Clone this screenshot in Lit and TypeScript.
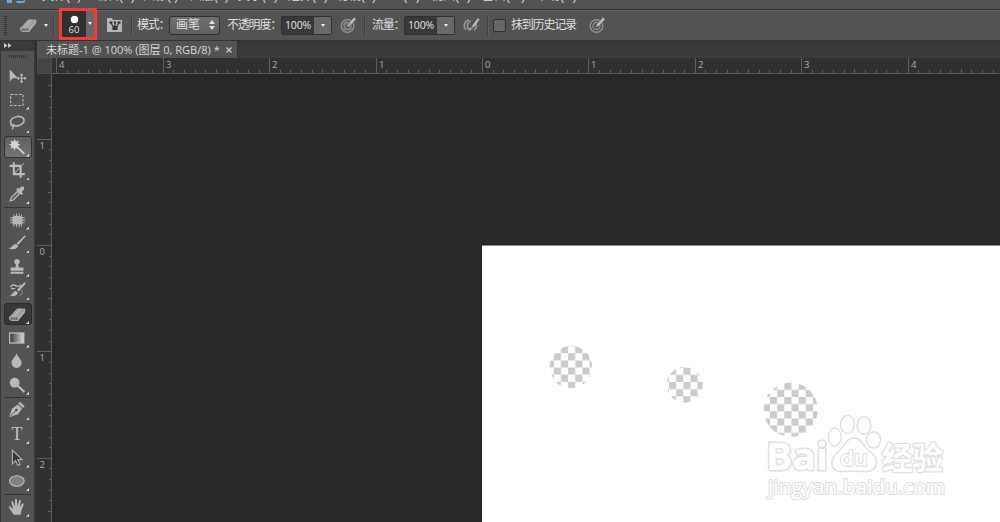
import { LitElement, html, svg, css } from "lit";
import { customElement, property } from "lit/decorators.js";

type Tick = { pos: number; len: number; label?: string };

const UNIT = 106.4;

function ticks(origin: number, limit: number): Tick[] {
  const out: Tick[] = [];
  for (let i = -50; i <= 50; i++) {
    const pos = origin + (i * UNIT) / 10;
    if (pos < 2 || pos > limit) continue;
    const major = i % 10 === 0;
    out.push({
      pos: Math.round(pos),
      len: major ? 16 : i % 5 === 0 ? 5 : 4,
      label: major ? String(Math.abs(i / 10)) : undefined,
    });
  }
  return out;
}

const icons: Record<string, unknown> = {
  move: svg`<path d="M4 5v13l3.400-3.600 5.600-.2z"/><path d="M17 10v9M12.500 14.500h9" stroke="#bdbdbd" stroke-width="1.200"/><path d="M17 9l2 2.500h-4zM17 20l2-2.500h-4zM11.500 14.500l2.500-2v4zM22.500 14.500l-2.500-2v4z"/>`,
  marquee: svg`<rect x="5" y="6" width="13.500" height="12" fill="none" stroke="#bdbdbd" stroke-width="1.200" stroke-dasharray="3 1.600"/>`,
  lasso: svg`<ellipse cx="12.300" cy="10" rx="7.500" ry="5" transform="rotate(-12 12.300 10)" fill="none" stroke="#b5b5b5" stroke-width="1.800"/><path d="M6.500 12.500c-2.500 2 .5 3.800 1.800 1.800M8 13c1 2 .3 3.500-1.200 6" fill="none" stroke="#b5b5b5" stroke-width="1.300"/>`,
  wand: svg`<path d="M11 11l9 8.500" stroke="#c9c9c9" stroke-width="2.200"/><path d="M9.500 3l1.300 3.300L14 4.800l-1.200 3.400 3 1.300-3.200 1.500 1 3-3.100-1.300L9.300 16 8 12.700 5 14l1.200-3.200L3 9.500l3.200-1.300L5 5l3.300 1.300z" fill="#d6d6d6"/>`,
  crop: svg`<path d="M8.500 3.500v13H20.500M4 7.500h12v13" fill="none" stroke="#bdbdbd" stroke-width="2.200"/><path d="M9 16L19.500 4.500" stroke="#bdbdbd"/>`,
  dropper: svg`<path d="M4.500 19.500l1-3.500 7-7 2.500 2.500L8 18.500z" fill="#686868" stroke="#c0c0c0" stroke-width="1.200"/><path d="M11 7l6 6 1.500-1.500-1.500-1.700c3-2 3.600-4.500 2.300-5.600s-3.500-.2-5 2L12.500 5.500z"/>`,
  patch: svg`<rect x="7" y="7.500" width="11" height="9.500" rx="3"/><path d="M8.500 6v13M11.500 5v15M14.500 5v15M17 6v13M4.500 9.500h16M4 12.300h17M4.500 15h16" stroke="#b5b5b5" stroke-width="1.100"/>`,
  brush: svg`<path d="M20.500 3.500L11.500 12.500l1.700 1.800L21.500 4.500zM11 13l2.300 2.300c-1.500 3.700-5.300 4.500-10.300 2.700 3-.4 4-4.800 8-5z"/>`,
  stamp: svg`<circle cx="12" cy="6.300" r="3"/><path d="M11 8h2.300l.6 4.500H19v3.500H5v-3.500h5.400zM5 17.300h14V19.300H5z"/>`,
  history: svg`<path d="M20 3.500l-8 8.500 2 1.700L21.500 5zM11 13l2 2c-1 3.500-4 4.500-9 3.300 3-1 3.300-4.800 7-5.300z"/><path d="M5 9c1-3 4-3 6-1.500 2 1.200 4 .5 5-1.500M10 10.500H5.500" fill="none" stroke="#b5b5b5" stroke-width="1.500"/><path d="M17 12.500c2 2 0 5-3 6" fill="none" stroke="#bdbdbd" stroke-dasharray="1.500 1"/>`,
  eraser: svg`<path d="M4 15L12 6h8.500l-7 9z" fill="#a2a2a2"/><path d="M4 15h9.500v4H6c-2 0-2.500-2-2-4z" fill="#777" stroke="#b8b8b8"/><path d="M13.500 15L20.500 6c1 1.500.6 3.500-.3 4.800L13.500 19z" fill="#b0b0b0"/><path d="M8.500 14.500L15.500 6" stroke="#c6c6c6"/>`,
  gradient: svg`<defs><linearGradient id="g"><stop stop-color="#333"/><stop offset="1" stop-color="#ddd"/></linearGradient></defs><rect x="4" y="6.500" width="15.500" height="11" fill="url(#g)" stroke="#c0c0c0" stroke-width="1.300"/>`,
  drop: svg`<path d="M11.500 3.500c1 3.800 5.500 6.500 5.500 10.500a5.500 5.500 0 01-11 0c0-4 4.500-6.700 5.500-10.500z"/>`,
  dodge: svg`<circle cx="9.500" cy="9.500" r="5.300"/><path d="M13 13l7 6.500" stroke="#bdbdbd" stroke-width="2.300"/>`,
  pen: svg`<path d="M15 3l5.500 5-2 1.800-5.300-5zM3.500 20l3-9.500L13 6l4.500 4.300-4 6z"/><path d="M4.500 19l6-6" stroke="#484848"/><circle cx="11.300" cy="12" r="1.400" fill="#484848"/>`,
  select: svg`<path d="M7 3.500v15l3.500-3.600 2.300 5.100 2.500-1-2.300-5.200h4.500z" fill="#353535" stroke="#ababab" stroke-width="1.300"/>`,
  ellipse: svg`<ellipse cx="11.800" cy="12" rx="8" ry="5.800" fill="#828282" stroke="#bdbdbd" stroke-width="1.200"/>`,
  hand: svg`<path d="M8.500 20.500L3.500 13.200c-1.200-1.900.5-2.500 1.700-1.200l2.500 2.500L6 7c-.2-1.900 1.600-2 2-.3l1.600 5L9.800 4.600c0-1.700 2-1.700 2.300 0l.4 6.900 1.800-6.500c.5-1.600 2.200-1.100 1.900.5l-1.100 6.800 2.300-3.700c.9-1.500 2.500-.6 1.800 1L17 15.500 15.700 20.500z"/>`,
};

const airbrush = svg`<circle cx="7.500" cy="10" r="6.300" fill="none" stroke="#8e8e8e" stroke-width="1.400"/><circle cx="7.500" cy="10" r="3.500" fill="none" stroke="#8e8e8e" stroke-width="1.300"/><path d="M6.500 11.500l1.200-3L14 1.300l2.200 1.700-6.200 7z" fill="#c0c0c0" stroke="#535353" stroke-width=".5"/>`;

@customElement("ps-tool")
export class PsTool extends LitElement {
  @property() name = "";
  @property() state = "";
  static styles = css`
    :host { display: block; height: 23.600px; flex: none; }
    .cell { box-sizing: border-box; position: relative; width: 28px; height: 22px; margin-left: 3px; border: 1px solid transparent; border-radius: 3px; }
    .hover { background: linear-gradient(#606060, #747474); border-color: #333; }
    .active { background: #383838; border-color: #2b2b2b; }
    .icon { display: block; width: 22px; height: 22px; margin: -1px 0 0 1px; fill: #b9b9b9; }
    .letter { display: block; width: 24px; text-align: center; font: 18px/20px "Liberation Serif", serif; color: #c2c2c2; }
    .corner { position: absolute; right: 2px; bottom: 0; width: 3px; height: 3px; background: #ddd; clip-path: polygon(100% 0, 100% 100%, 0 100%); }
  `;
  render() {
    return html`<div class="cell ${this.state}">
      ${this.name === "type"
        ? html`<span class="letter">T</span>`
        : html`<svg class="icon" viewBox="0 0 24 24">${icons[this.name]}</svg>`}
      ${this.name === "move" ? "" : html`<i class="corner"></i>`}
    </div>`;
  }
}

@customElement("app-root")
export class AppRoot extends LitElement {
  static styles = css`
    :host { display: flex; flex-direction: column; width: 1000px; height: 522px; overflow: hidden; background: #282828; color: #dedede; font: 12px "Liberation Sans", "Noto Sans CJK SC", sans-serif; }
    * { box-sizing: border-box; }
    svg { display: block; flex: none; }
    .menu { height: 10px; flex: none; overflow: hidden; background: #535353; border-bottom: 1px solid #333; display: flex; align-items: flex-end; }
    .menu svg { margin: 0 15px 6px 6px; }
    .items { display: flex; height: 22px; line-height: 18px; }
    .item { flex: none; white-space: nowrap; }
    .options { height: 31px; flex: none; background: #535353; border-top: 1px solid #686868; border-bottom: 1px solid #333; display: flex; align-items: center; padding-bottom: 1px; }
    .grip { width: 3px; height: 19px; margin-left: 4px; background: repeating-linear-gradient(#333 0 1px, transparent 1px 2px); }
    .arrow { width: 0; height: 0; border: 2.500px solid transparent; border-top: 3px solid #eee; border-bottom: 0; }
    .divider { width: 2px; height: 21px; background: #414141; border-right: 1px solid #5e5e5e; }
    .preset { width: 38px; height: 32px; flex: none; margin-left: 4px; border: 3px solid #f33a36; display: flex; z-index: 1; margin-bottom: 3px; }
    .tip { width: 24px; background: #303030; display: flex; flex-direction: column; align-items: center; font: 9.500px/10px "Open Sans", sans-serif; padding-top: 5px; gap: 2px; }
    .dot { width: 7px; height: 7px; border-radius: 50%; background: #fff; box-shadow: 0 0 1px #fff; }
    .drop { flex: 1; display: flex; align-items: center; justify-content: center; background: #686868; }
    .label { flex: none; white-space: nowrap; line-height: 18px; letter-spacing: -1.200px; }
    .mode { width: 51px; height: 19px; border: 1px solid #303030; border-radius: 3px; background: linear-gradient(#707070, #606060); display: flex; align-items: center; justify-content: space-between; padding: 0 4px 0 6px; line-height: 16px; }
    .field { width: 51px; height: 19px; border: 1px solid #303030; border-radius: 2px; display: flex; background: #383838; font: 10.500px/17px "Open Sans", sans-serif; color: #e6e6e6; }
    .value { width: 32px; text-align: center; letter-spacing: -.2px; }
    .check { width: 13px; height: 13px; border: 1px solid #303030; border-radius: 2px; background: #676767; }
    .main { flex: 1; min-height: 0; display: flex; }
    .tools { width: 35px; flex: none; display: flex; flex-direction: column; background: #535353; border-left: 1px solid #383838; border-right: 1px solid #383838; }
    .collapse { height: 10px; flex: none; background: #3a3a3a; padding: 2px 0 0 3px; }
    .handle { width: 18px; height: 3px; flex: none; margin: 4px 0 7px 8px; background: repeating-linear-gradient(90deg, #333 0 1px, transparent 1px 2px); }
    .rule { width: 27px; height: 1px; flex: none; margin: 0 0 1px 3px; background: #353535; }
    .doc { flex: 1; min-width: 0; display: flex; flex-direction: column; border-left: 2px solid #303030; }
    .tabs { height: 17px; flex: none; background: linear-gradient(#383838, #3c3c3c); }
    .tab { width: 201px; height: 17px; background: #535353; display: flex; align-items: center; padding-left: 9px; font: 11px/16px "Open Sans", "Noto Sans CJK SC", sans-serif; color: #d6d6d6; white-space: nowrap; border-right: 1px solid #303030; }
    .title { width: 173px; letter-spacing: 0; margin-right: 7px; }
    .hruler, .lower { display: flex; }
    .corner { width: 15px; height: 16px; background: #444; border: 1px dotted #555; }
    .num { font: 9.500px "Open Sans", sans-serif; fill: #aaa; }
    .mark { font-family: "Open Sans", "Noto Sans CJK SC", sans-serif; fill: #fff; stroke: #e0e0e0; paint-order: stroke; stroke-linejoin: round; }
  `;

  private hole(id: string, cx: number, cy: number, r: number, px: number, py: number) {
    return svg`<pattern id=${id} x=${px} y=${py} width="14.300" height="14.300" patternUnits="userSpaceOnUse"><path d="M0 0h7.150v7.150H0zM7.150 7.150h7.150v7.150H7.150z" fill="#cbcbcb"/></pattern><circle cx=${cx} cy=${cy} r=${r} fill="url(#${id})"/>`;
  }

  private field(value: string) {
    return html`<div class="field"><span class="value">${value}</span><span class="drop"><i class="arrow"></i></span></div>`;
  }

  private tool(name: string, state = "") {
    return html`<ps-tool .name=${name} .state=${state}></ps-tool>`;
  }

  render() {
    const menus: [string, number][] = [["文件(F)", 53], ["编辑(E)", 48], ["图像(I)", 47], ["图层(L)", 48], ["文字(Y)", 50], ["选择(S)", 49], ["滤镜(T)", 51], ["3D(D)", 43], ["视图(V)", 51], ["窗口(W)", 54], ["帮助(H)", 50]];
    return html`
      <div class="menu">
        <svg width="21" height="3"><path d="M1 0h5v3H1zM10 1h7l2-1v2l-2 1h-6z" fill="#79a5d5"/></svg>
        <div class="items">${menus.map(([t, w]) => html`<span class="item" style="width:${w}px">${t}</span>`)}</div>
      </div>
      <div class="options">
        <i class="grip"></i>
        <svg width="22" height="22" viewBox="0 0 24 24" style="margin-left:10px">${icons.eraser}</svg>
        <i class="arrow" style="margin-left:5px"></i>
        <i class="divider" style="margin-left:5px"></i>
        <div class="preset"><div class="tip"><i class="dot"></i>60</div><div class="drop"><i class="arrow"></i></div></div>
        <svg width="16" height="16" viewBox="0 0 16 16" style="margin-left:10px"><path d="M0 1h5l1 2h9v12H0z" fill="#b5b5b5"/><path d="M4 6l2.500 4M8 6v4M12 6l-2.500 4" fill="none" stroke="#333" stroke-width="1.200"/><path d="M2.500 4.500h3v2h-3zM7 4.500h2v2H7zM10.500 4.500h3v2h-3zM5.500 9h5v4h-5z" fill="#333"/></svg>
        <i class="divider" style="margin-left:8px"></i>
        <span class="label" style="margin-left:4px;width:32px">模式：</span>
        <div class="mode">画笔<svg width="6" height="10"><path d="M0 4l3-4 3 4zM0 6h6l-3 4z" fill="#e0e0e0"/></svg></div>
        <span class="label" style="margin-left:7px;width:54px">不透明度：</span>
        ${this.field("100%")}
        <svg width="17" height="18" style="margin-left:8px">${airbrush}<path d="M2 8h10M2 13h10M5 5v11M10 7v9" stroke="#8e8e8e" stroke-width=".8"/></svg>
        <i class="divider" style="margin-left:7px"></i>
        <span class="label" style="margin-left:6px;width:32px">流量：</span>
        ${this.field("100%")}
        <svg width="18" height="18" style="margin-left:8px"><path d="M6 4C1 5 0 11 3 14M8 5c-4 1-5 8-1 9l7-8M13 8c1 3 0 5-2 6M5 14l3-2" fill="none" stroke="#969696" stroke-width="1.600"/><path d="M9 10l6-8 1.500 1.500L11 11z" fill="#bbb"/></svg>
        <i class="divider" style="margin-left:6px"></i>
        <i class="check" style="margin-left:4px"></i>
        <span class="label" style="margin-left:5px;width:64px">抹到历史记录</span>
        <svg width="18" height="18" style="margin-left:14px">${airbrush}</svg>
      </div>
      <div class="main">
        <div class="tools">
          <div class="collapse"><svg width="8" height="6"><path d="M0 0l3.500 2.500L0 5zM4 0l3.500 2.500L4 5z" fill="#ccc"/></svg></div>
          <i class="handle"></i>
          ${["move", "marquee", "lasso"].map((n) => this.tool(n))}
          ${this.tool("wand", "hover")}${this.tool("crop")}${this.tool("dropper")}
          <i class="rule"></i>
          ${["patch", "brush", "stamp", "history"].map((n) => this.tool(n))}
          ${this.tool("eraser", "active")}
          ${["gradient", "drop", "dodge"].map((n) => this.tool(n))}
          <i class="rule"></i>
          ${["pen", "type", "select", "ellipse"].map((n) => this.tool(n))}
          <i class="rule"></i>
          ${this.tool("hand")}
        </div>
        <div class="doc">
          <div class="tabs"><div class="tab"><span class="title">未标题-1 @ 100% (图层 0, RGB/8) *</span><svg width="6" height="6"><path d="M.5.5l5 5m0-5l-5 5" stroke="#ccc" stroke-width="1.300"/></svg></div></div>
          <div class="hruler">
            <i class="corner"></i>
            <svg width="948" height="16" style="background:#303030"><path d="M0 15.500h948" stroke="#5c5c5c"/>
              ${ticks(430, 948).map((t) => svg`<path d="M${t.pos + 0.5} ${16 - t.len}v${t.len}" stroke="#5e5e5e"/>${t.label ? svg`<text class="num" x=${t.pos + 3} y="10">${t.label}</text>` : ""}`)}
            </svg>
          </div>
          <div class="lower">
            <svg width="15" height="448" style="background:#303030"><path d="M14.500 0v448" stroke="#5c5c5c"/>
              ${ticks(171, 448).map((t) => svg`<path d="M${16 - t.len} ${t.pos + 0.5}h${t.len}" stroke="#5e5e5e"/>${t.label ? svg`<text class="num" x="2.500" y=${t.pos + 10}>${t.label}</text>` : ""}`)}
            </svg>
            <svg width="948" height="448" viewBox="52 74 948 448">
              <path d="M52 74h948v448H52z" fill="#282828"/>
              <path d="M481 244h519v278H481z" fill="#202020"/>
              <path d="M482 245.500h518V522H482z" fill="#fff"/>
              ${this.hole("c1", 571, 367, 21.2, 553.8, 353.2)}
              ${this.hole("c2", 684.8, 384.7, 18, 669, 382)}
              ${this.hole("c3", 790.7, 409.7, 27, 770, 397)}
              <g fill="#fff" stroke="#e0e0e0" stroke-width="1.500">
                <ellipse cx="834.700" cy="437" rx="6.500" ry="8.700"/><ellipse cx="847.500" cy="424.500" rx="7" ry="9"/><ellipse cx="864" cy="425.500" rx="7" ry="8.700"/><ellipse cx="873.500" cy="440" rx="7" ry="8.300"/>
                <path d="M854 438c7 0 9 7 14 12 5 4 10 8 8 15-2 8-11 7-22 6-11 1-20 2-22-6-1-7 3-11 8-15 5-5 7-12 14-12z"/>
              </g>
              <text class="mark" x="766" y="470" font-size="38" font-weight="700" textLength="62" lengthAdjust="spacingAndGlyphs" stroke-width="3">Bai</text>
              <text class="mark" x="840" y="466" font-size="22" font-weight="600" textLength="28" lengthAdjust="spacingAndGlyphs" stroke-width="2.200">du</text>
              <text class="mark" x="882" y="468.500" font-size="31" font-weight="700" textLength="61" lengthAdjust="spacingAndGlyphs" stroke-width="2.500">经验</text>
              <text class="mark" x="768" y="494" font-size="20" font-weight="400" textLength="177" lengthAdjust="spacingAndGlyphs" stroke-width="2.200">jingyan.baidu.com</text>
            </svg>
          </div>
        </div>
      </div>`;
  }
}
